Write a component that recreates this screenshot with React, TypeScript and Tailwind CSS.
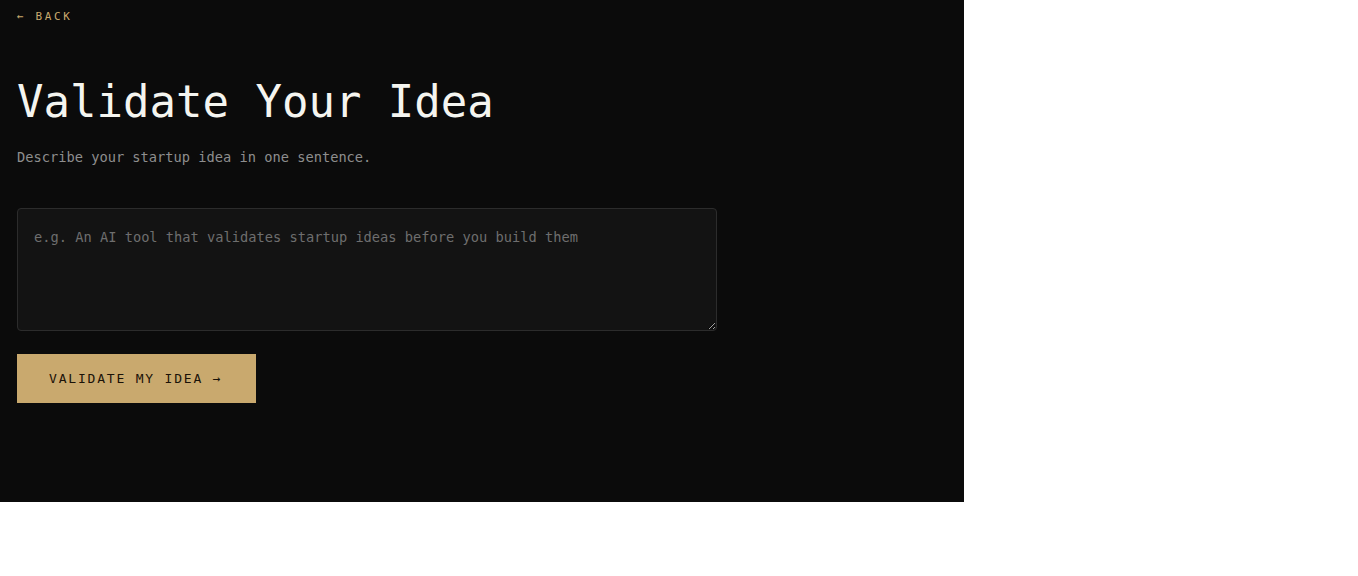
const mono = "font-['DejaVu_Sans_Mono','Liberation_Mono',monospace]";

const App = () => {
  return (
    <div className="min-h-screen bg-white">
      <div className={`w-[964px] h-[502px] bg-[#0b0b0b] px-[17px] pt-[9px] ${mono}`}>
        <a href="#" className="block text-[11px] leading-[16px] tracking-[0.24em] text-[#c9a96e]">
          ← BACK
        </a>

        <h1 className="mt-[53px] text-[44px] leading-[48px] text-[#f5f5f0]">
          Validate Your Idea
        </h1>
        <p className="mt-[22px] text-[13.7px] leading-[18px] text-[#8e8e8e]">
          Describe your startup idea in one sentence.
        </p>

        <textarea
          className="mt-[42px] block w-[700px] h-[123px] rounded-[4px] border border-[#2c2c2c] bg-[#131313] px-[16px] py-[18px] text-[13.7px] leading-[20px] text-[#e5e5e5] placeholder:text-[#6e6e6e] outline-none"
          placeholder="e.g. An AI tool that validates startup ideas before you build them"
        />

        <button className="mt-[23px] block w-[239px] h-[49px] bg-[#c9a96e] text-left pl-[32px] text-[13px] tracking-[1.8px] text-[#1a1208]">
          VALIDATE MY IDEA →
        </button>
      </div>
    </div>
  );
};

export default App;
